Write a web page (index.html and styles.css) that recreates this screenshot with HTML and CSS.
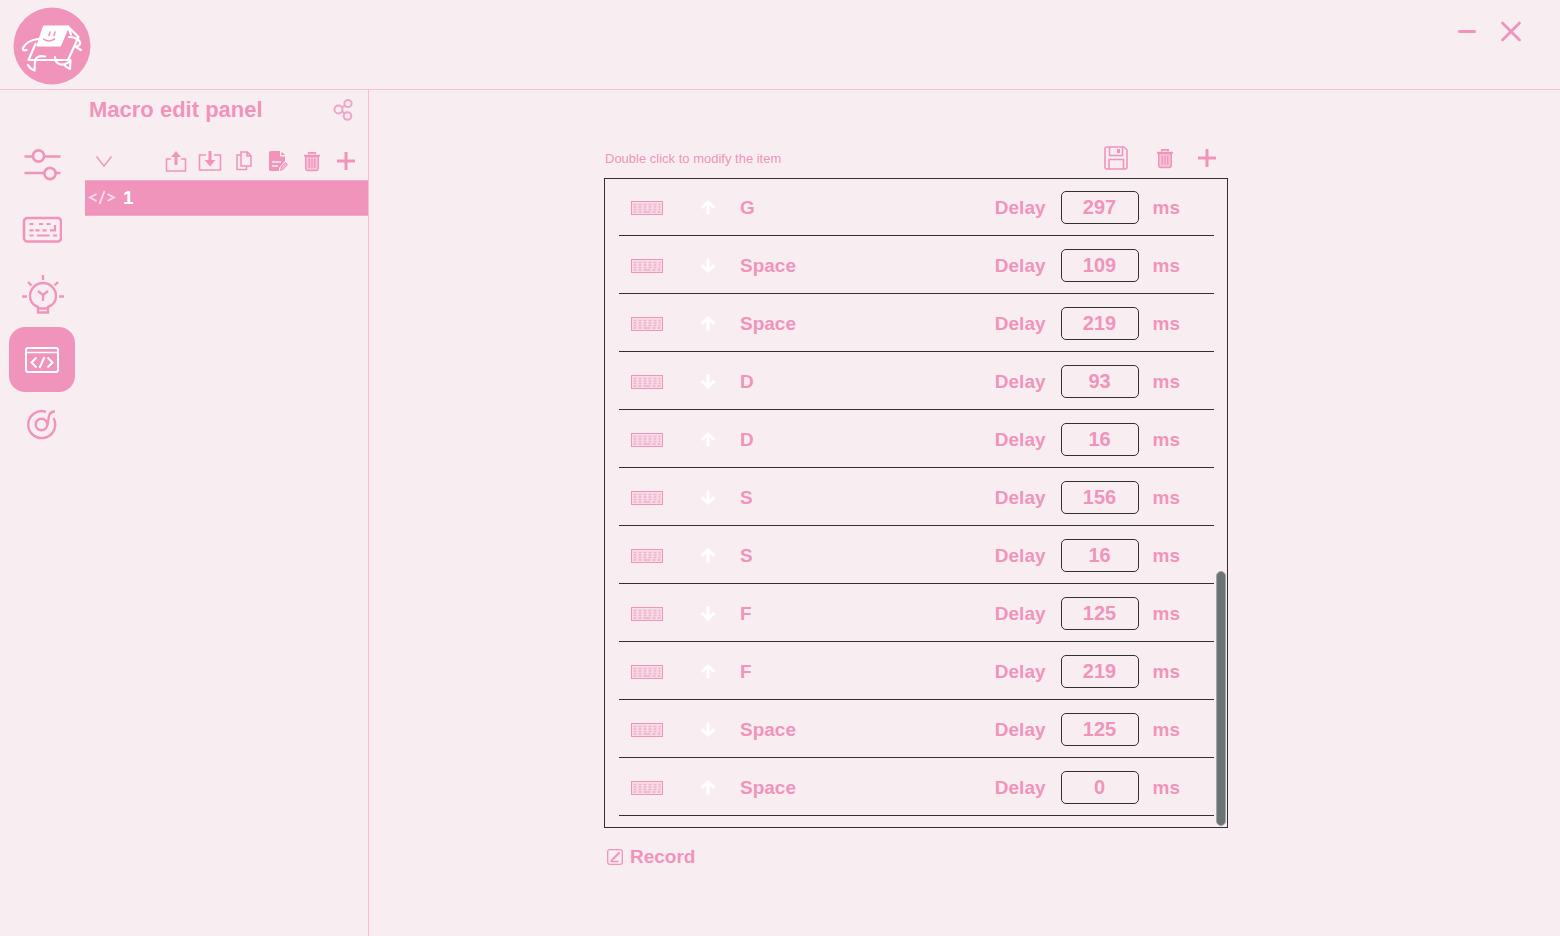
FILE: index.html
```html
<!DOCTYPE html>
<html lang="en">
<head>
  <meta charset="UTF-8">
  <title>Macro edit panel</title>
  <link rel="stylesheet" href="styles.css">
</head>
<body>
  <svg class="defs" aria-hidden="true">
    <symbol id="trash" viewBox="0 0 20 22">
      <path d="M1 4.500h18M6.500 3V1.500h7V3" fill="none" stroke="currentColor" stroke-width="2"/>
      <path d="M3 5.500V19q0 2 2 2h10q2 0 2-2V5.500z" fill="currentColor" fill-opacity=".5" stroke="currentColor" stroke-width="1.500"/>
      <path d="M7 8v10M10 8v10M13 8v10" stroke="currentColor" stroke-width="1.500"/>
    </symbol>
    <symbol id="plus" viewBox="0 0 20 20">
      <path d="M10 1v18M1 10h18" stroke="currentColor" stroke-width="3"/>
    </symbol>
    <symbol id="keys" viewBox="0 0 32 14">
      <rect x=".5" y=".5" width="31" height="13" fill="currentColor" fill-opacity=".2" stroke="currentColor"/>
      <path d="M2.500 3.500h27M2.500 6h27M2.500 8.500h27" stroke="currentColor" stroke-width="1.500" stroke-dasharray="3 2" stroke-opacity=".6" fill="none"/>
      <path d="M2.500 11h3M7.500 11h3M12.500 11h7M21.500 11h3M26.500 11h3" stroke="currentColor" stroke-width="1.200"/>
    </symbol>
    <symbol id="up" viewBox="0 0 16 16">
      <path d="M8 14.500V2M1.500 8L8 2l6.500 6" fill="none" stroke="currentColor" stroke-width="3"/>
    </symbol>
    <symbol id="down" viewBox="0 0 16 16">
      <path d="M8 .5V13M1.500 7L8 13l6.500-6" fill="none" stroke="currentColor" stroke-width="3"/>
    </symbol>
  </svg>

  <header class="topbar">
    <svg class="logo" viewBox="0 0 78 78" aria-hidden="true">
      <circle cx="39" cy="39" r="38.500" fill="#f094bb"/>
      <g fill="none" stroke="#fff" stroke-width="2.200" stroke-linejoin="round" stroke-linecap="round">
        <path d="M31 19.500h24L47 38.500H24.500z" fill="#fff"/>
        <path d="M55 19.500l10.500 10.500L55 53H15.500l7-16M55 19.500l3 8"/>
        <path d="M25 32c-7 1-12 4-14.500 8-1.500 3 0 4 3 3"/>
        <path d="M56 30c5 0 10 2 11 5s-2 4-4 5l5 3"/>
        <path d="M32 49.500c-6-1.500-9.500 1-10 4.500l-.5 9.500c-3-1-5-3-6.500-5.500"/>
        <path d="M42 50c0 5 3 8 8 7.500 4-.5 7-3 7.500-4.500l-.5 9c-3-1-5-3-6-4.500"/>
      </g>
      <path d="M37 25l-1 3.500M42 25l-1 3.500M30.500 32q5 4 11 0" fill="none" stroke="#f094bb" stroke-width="1.600" stroke-linecap="round"/>
    </svg>
    <div class="window-buttons">
      <button class="icon-button" aria-label="Minimize">
        <svg width="22" height="22" viewBox="0 0 22 22"><path d="M3.500 11.500h15" stroke="currentColor" stroke-width="3" stroke-linecap="round"/></svg>
      </button>
      <button class="icon-button" aria-label="Close">
        <svg width="22" height="22" viewBox="0 0 22 22"><path d="M2.500 3l17 17M19.500 3l-17 17" stroke="currentColor" stroke-width="2.800" stroke-linecap="round"/></svg>
      </button>
    </div>
  </header>

  <div class="layout">
    <nav class="sidebar">
      <button class="nav-button" aria-label="Settings">
        <svg width="40" height="40" viewBox="0 0 40 40" fill="none" stroke="currentColor" stroke-width="2.600">
          <path d="M2.500 11.500h8.500M22 11.500h16.500M2.500 28h19.500M34 28h4.500"/>
          <circle cx="16.500" cy="11" r="5.600"/><circle cx="28" cy="28.500" r="5.600"/>
        </svg>
      </button>
      <button class="nav-button" aria-label="Keyboard">
        <svg width="40" height="40" viewBox="0 0 40 40" fill="none" stroke="currentColor" stroke-width="2.200">
          <rect x="2" y="8" width="37" height="23.500" rx="3.500" stroke-width="2.600"/>
          <path d="M7.500 14h4M17 14h4M24.500 14h4M7.500 20.300h4M13.500 20.300h4M20.500 20.300h4M28 20.300h5V15M7.500 25.500h4M15 25.500h12.500M31 25.500h4"/>
        </svg>
      </button>
      <button class="nav-button" aria-label="Lighting">
        <svg width="44" height="44" viewBox="0 0 44 44" fill="none" stroke="currentColor" stroke-width="2.400">
          <path d="M18 34C12.500 32 10 28 10 23a13 13 0 0 1 26 0c0 5-2.500 9-8 11v5.500H18zM18 35.500h10"/>
          <path d="M23 28v-6l-5-4M23 22l5-4"/>
          <path d="M23 2v5M8 9l3.500 3.500M38 9l-3.500 3.500M2 23.500h5M39 23.500h5"/>
        </svg>
      </button>
      <button class="nav-button active" aria-label="Macro">
        <svg width="36" height="28" viewBox="0 0 36 28" fill="none" stroke="currentColor" stroke-width="2">
          <rect x="2" y="2" width="32" height="24" rx="2"/>
          <path d="M2 6.500h32" stroke-width="1.500"/>
          <path d="M12.500 11.500l-5 5 5 5M23.500 11.500l5 5-5 5M20.500 11l-5 11"/>
        </svg>
      </button>
      <button class="nav-button" aria-label="Music">
        <svg width="32" height="32" viewBox="0 0 32 32" fill="none" stroke="currentColor" stroke-width="2.400">
          <path d="M20 2.800A13.500 13.500 0 1 0 27.500 9"/>
          <circle cx="15.500" cy="15.500" r="5.800"/>
          <path d="M21.300 16c1-3 1-6 1.700-9 .8-3 2.500-4.500 6-4.500"/>
        </svg>
      </button>
    </nav>

    <aside class="macro-panel">
      <div class="panel-head">
        <h1 class="panel-title">Macro edit panel</h1>
        <button class="icon-button" aria-label="Share">
          <svg width="20" height="22" viewBox="0 0 20 22" fill="none" stroke="currentColor" stroke-width="2" opacity=".8">
            <circle cx="5.500" cy="10.500" r="4"/><circle cx="15" cy="4.500" r="3.600"/><circle cx="14.500" cy="17" r="3.800"/>
            <path d="M9 8.500l3-2M9 12.500l2.500 2"/>
          </svg>
        </button>
      </div>
      <div class="panel-tools">
        <button class="icon-button collapse" aria-label="Collapse">
          <svg width="18" height="12" viewBox="0 0 18 12"><path d="M1.500 1.500L9 11l7.500-9.500" fill="none" stroke="currentColor" stroke-width="1.400"/></svg>
        </button>
        <button class="icon-button" aria-label="Export">
          <svg width="22" height="22" viewBox="0 0 22 22"><path d="M6 9H1.500v12h19V9H16" fill="none" stroke="currentColor" stroke-width="1.600"/><path d="M9.500 15V7H6l5-6 5 6h-3.500v8z" fill="currentColor"/></svg>
        </button>
        <button class="icon-button" aria-label="Import">
          <svg width="24" height="22" viewBox="0 0 24 22"><path d="M8 5H1.500v15h21V5H16" fill="none" stroke="currentColor" stroke-width="1.600"/><path d="M10.500 1v9H6.500l5.500 6.500 5.500-6.500h-4V1z" fill="currentColor"/></svg>
        </button>
        <button class="icon-button" aria-label="Copy">
          <svg width="16" height="20" viewBox="0 0 16 20" fill="none" stroke="currentColor" stroke-width="1.500"><path d="M5 1h6.500L15 5v10H5zM11 1v4h4M5 4H1v14.500h9.500V15"/></svg>
        </button>
        <button class="icon-button" aria-label="Rename">
          <svg width="20" height="22" viewBox="0 0 20 22"><path d="M2.500 1H12v5.500h5V11l-6 7v3H2.500Q1 21 1 19.500v-17Q1 1 2.500 1z" fill="currentColor"/><path d="M13.500 1.500L17 5h-3.500z" fill="currentColor"/><path d="M4 12h9M4 16h6" stroke="#f8eef2" stroke-width="1.300"/><path d="M12.500 20.500l1-4 4-4 2 2-4 4.500z" fill="currentColor" fill-opacity=".6" stroke="currentColor"/></svg>
        </button>
        <button class="icon-button" aria-label="Delete macro"><svg width="18" height="21"><use href="#trash"/></svg></button>
        <button class="icon-button" aria-label="Add macro"><svg width="20" height="20"><use href="#plus"/></svg></button>
      </div>
      <a class="macro-item" href="#">
        <svg width="28" height="16" viewBox="0 0 28 16" fill="none" stroke="currentColor" stroke-width="1.800" opacity=".7"><path d="M8.500 4L2 7.500 8.500 11M19.500 4L26 7.500 19.500 11M16.500 1l-5 13"/></svg>
        <span>1</span>
      </a>
    </aside>

    <main class="editor">
      <div class="editor-tools">
        <span class="hint">Double click to modify the item</span>
        <button class="icon-button save" aria-label="Save">
          <svg width="24" height="24" viewBox="0 0 24 24" fill="none" stroke="currentColor" stroke-width="1.600">
            <path d="M3 1h17l3 3v17q0 2-2 2H3q-2 0-2-2V3q0-2 2-2z"/>
            <path d="M5.500 1v8.500h13V1M5 23v-9.500h14.500V23"/><path d="M14.500 3v4" stroke-width="3"/>
          </svg>
        </button>
        <button class="icon-button" aria-label="Delete item"><svg width="18" height="21"><use href="#trash"/></svg></button>
        <button class="icon-button" aria-label="Add item"><svg width="20" height="20"><use href="#plus"/></svg></button>
      </div>
      <div class="list-box">
        <ul id="macroList" class="macro-list"></ul>
        <div class="scroll-thumb"></div>
      </div>
      <button class="record">
        <svg width="16" height="16" viewBox="0 0 16 16" fill="none" stroke="currentColor"><rect x=".7" y=".7" width="14.600" height="14.600" rx="2" stroke-width="1.300"/><path d="M5.500 10.500l7-7" stroke-width="2"/><path d="M3.500 12.500h8M3.500 12.500l2-2" stroke-width="1.400"/></svg>
        Record
      </button>
    </main>
  </div>

  <script>
    const actions = [
      ['up', 'G', 297],
      ['down', 'Space', 109],
      ['up', 'Space', 219],
      ['down', 'D', 93],
      ['up', 'D', 16],
      ['down', 'S', 156],
      ['up', 'S', 16],
      ['down', 'F', 125],
      ['up', 'F', 219],
      ['down', 'Space', 125],
      ['up', 'Space', 0]
    ];

    // Build one row per recorded key action
    document.getElementById('macroList').innerHTML = actions.map(([dir, key, delay], i) => `
      <li class="action">
        <svg class="keys" width="32" height="14"><use href="#keys"/></svg>
        <svg class="arrow" width="16" height="16"><use href="#${dir}"/></svg>
        <span class="key-name">${key}</span>
        <label class="delay-label" for="delay${i}">Delay</label>
        <input class="delay" id="delay${i}" type="text" value="${delay}">
        <span class="unit">ms</span>
      </li>`).join('');
  </script>
</body>
</html>
```
FILE: styles.css
```css
* { box-sizing: border-box; }
body { margin: 0; min-height: 100vh; display: flex; flex-direction: column; font-family: "Liberation Sans", Arial, sans-serif; font-size: 19px; font-weight: bold; background-color: #f8eef2; color: #f094bb; }
button { font: inherit; color: inherit; background: none; border: 0; padding: 0; }
svg { display: block; flex: none; }
.defs { position: absolute; width: 0; height: 0; }
.icon-button { display: flex; align-items: center; justify-content: center; }

/* Top bar */
.topbar { display: flex; justify-content: space-between; align-items: flex-start; height: 90px; padding: 7px 38px 0 13px; border-bottom: 1px solid #f5bfd5; }
.logo { width: 78px; height: 78px; }
.window-buttons { display: flex; gap: 22px; padding-top: 13px; }

.layout { flex: 1; display: flex; }

/* Left navigation */
.sidebar { width: 85px; padding: 42px 0 0 9px; }
.nav-button { display: flex; align-items: center; justify-content: center; width: 66px; height: 65px; border-radius: 16px; }
.nav-button.active { background-color: #f094bb; color: white; }

/* Macro panel */
.macro-panel { width: 284px; border-right: 1px solid #f9bcd2; }
.panel-head { display: flex; justify-content: space-between; align-items: center; height: 40px; padding: 0 15px 0 4px; }
.panel-title { margin: 0; font-size: 22px; }
.panel-tools { display: flex; align-items: center; height: 50px; padding: 12px 5px 0 2px; }
.panel-tools .icon-button { width: 34px; }
.panel-tools .collapse { margin-right: auto; }
.macro-item { display: flex; align-items: center; gap: 7px; height: 36px; padding-left: 3px; background-color: #f094bb; color: white; text-decoration: none; border: 1px solid #f3aac8; border-width: 1px 0; }

/* Editor */
.editor { flex: 1; padding: 48px 332px 48px 235px; }
.editor-tools { display: flex; align-items: center; height: 40px; padding: 0 11px 0 1px; gap: 23px; }
.save { margin-right: 5px; }
.hint { margin-right: auto; font-size: 13px; font-weight: normal; }
.list-box { position: relative; height: 650px; border: 1px solid #303033; overflow: hidden; display: flex; flex-direction: column; justify-content: flex-end; padding: 0 13px 11px 14px; }
.macro-list { list-style: none; margin: 0; padding: 0; }
.action { display: flex; align-items: center; height: 58px; padding: 2px 34px 0 12px; border-bottom: 1px solid #303033; }
.arrow { margin-left: 37px; color: white; }
.key-name { flex: 1; margin-left: 24px; }
.delay { width: 78px; height: 33px; margin: 0 14px 0 15px; padding: 0; text-align: center; font: inherit; font-size: 20px; color: inherit; background: none; border: 1px solid #303033; border-radius: 5px; }
.scroll-thumb { position: absolute; right: 1px; bottom: 1px; width: 10px; height: 255px; border-radius: 5px; background-color: #6b7375; border: 1px solid #a3a5a8; }
.record { display: flex; align-items: center; gap: 7px; margin: 18px 0 0 3px; }
```
